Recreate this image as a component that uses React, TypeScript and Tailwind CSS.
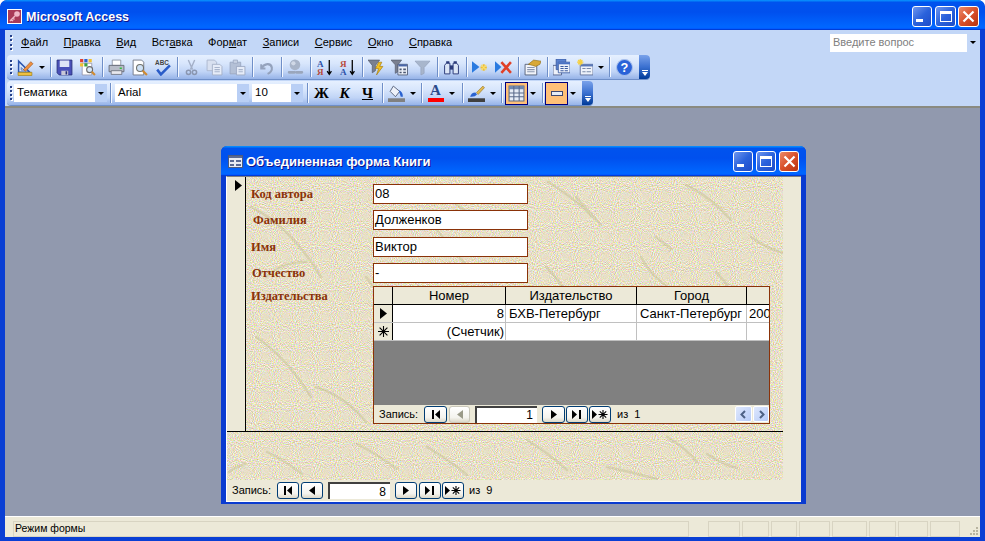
import type { ReactNode } from "react";

const Sep = () => (
  <div className="flex h-[20px] w-[6px] shrink-0 justify-center">
    <div className="h-full w-px bg-[#6f8fc8] shadow-[1px_0_0_#f4f8ff]" />
  </div>
);

const Caret = ({ w = 10 }: { w?: number }) => (
  <div className="flex h-[22px] shrink-0 items-center justify-center" style={{ width: w }}>
    <div className="h-0 w-0 border-x-[3px] border-t-[3px] border-x-transparent border-t-black" />
  </div>
);

const Btn = ({ children }: { children: ReactNode }) => (
  <div className="flex h-[22px] w-[23px] shrink-0 items-center justify-center">{children}</div>
);

const Ico = ({ children }: { children: ReactNode }) => (
  <svg width="17" height="17" viewBox="0 0 16 16" className="shrink-0">
    {children}
  </svg>
);

const Gripper = () => (
  <div className="ml-[3px] mr-[2px] flex h-[17px] w-[2px] shrink-0 flex-col justify-between py-px">
    {[0, 1, 2, 3].map((i) => (
      <div key={i} className="h-[2px] w-[2px] bg-[#27418a] shadow-[1px_1px_0_#fff]" />
    ))}
  </div>
);

const EndCap = () => (
  <div className="flex h-full w-[11px] shrink-0 flex-col items-center justify-end rounded-r-[4px] bg-[linear-gradient(180deg,#7aa2ea,#3a70d0_50%,#003a98)] pb-[3px]">
    <div className="mb-px h-px w-[6px] bg-white" />
    <div className="h-0 w-0 border-x-[3px] border-t-[4px] border-x-transparent border-t-white" />
  </div>
);

const Toolbar = ({ width, children }: { width: string; children: ReactNode }) => (
  <div className={`flex h-[24px] items-center rounded-[4px] bg-[linear-gradient(180deg,#e6f0ff_0%,#d8e6fc_35%,#c0d4f6_70%,#96b3e8_100%)] shadow-[0_1px_0_#6f8fc8] ${width}`}>
    {children}
  </div>
);

const Combo = ({ label, w, cls = "" }: { label: string; w: string; cls?: string }) => (
  <div className={`flex h-[18px] shrink-0 items-center bg-white pl-[3px] text-[11.5px] text-black ${w} ${cls}`}>
    <span className="flex-1">{label}</span>
    <div className="flex h-full w-[12px] items-center justify-center bg-[#b9cff5]">
      <div className="h-0 w-0 border-x-[3px] border-t-[3px] border-x-transparent border-t-black" />
    </div>
  </div>
);

const WinBtn = ({ kind, size }: { kind: "min" | "max" | "close"; size: string }) => (
  <div className={`flex shrink-0 items-center justify-center rounded-[3px] border border-white ${size} ${kind === "close" ? "bg-[linear-gradient(135deg,#eb8a6a,#d9502a_50%,#b8330f)]" : "bg-[linear-gradient(135deg,#6f96ee,#2a62dc_50%,#1e4cc8)]"}`}>
    {kind === "min" && <div className="mt-[8px] mr-[5px] h-[3px] w-[7px] bg-white" />}
    {kind === "max" && <div className="h-[11px] w-[12px] border border-t-[3px] border-white" />}
    {kind === "close" && (
      <svg width="13" height="13" viewBox="0 0 13 13">
        <path d="M1.5 1.5l10 10M11.5 1.5l-10 10" stroke="#fff" strokeWidth="2.2" />
      </svg>
    )}
  </div>
);

// noise + faint streaks for the form background
const Texture = ({ id, streaks }: { id: string; streaks: string }) => (
  <svg className="absolute inset-0 h-full w-full">
    <filter id={id} x="0" y="0" width="100%" height="100%" colorInterpolationFilters="sRGB">
      <feTurbulence type="fractalNoise" baseFrequency="0.95" numOctaves="1" seed="4" />
      <feColorMatrix
        type="matrix"
        values="0.55 0 0 0 0.63  0 0.55 0 0 0.6  0 0 0.9 0 0.33  0 0 0 0 1"
      />
    </filter>
    <rect width="100%" height="100%" filter={`url(#${id})`} />
    <path d={streaks} fill="none" stroke="#c4be92" strokeWidth="2.5" strokeLinecap="round" opacity="0.45" />
  </svg>
);

const Field = ({ label, value, pad }: { label: string; value: string; pad: string }) => (
  <div className="flex h-[20px] items-center">
    <div className={`w-[122px] shrink-0 font-['Liberation_Serif',serif] text-[12.5px] font-bold text-[#8a3208] ${pad}`}>{label}</div>
    <div className="flex h-[20px] w-[155px] items-center border border-[#8a3208] bg-white pl-px text-[13px] text-black">{value}</div>
  </div>
);

const NavGlyph = ({ kind, dim }: { kind: string; dim?: boolean }) => {
  const c = dim ? "#9a9a88" : "#000";
  return (
    <svg width="16" height="11" viewBox="0 0 16 11">
      {kind === "first" && <path d="M4 1h2v9H4zM12 1v9L7 5.5z" fill={c} />}
      {kind === "prev" && <path d="M11 1v9L5 5.5z" fill={c} />}
      {kind === "next" && <path d="M5 1v9l6-4.5z" fill={c} />}
      {kind === "last" && <path d="M3 1v9l5-4.5zM10 1h2v9h-2z" fill={c} />}
      {kind === "new" && (
        <g>
          <path d="M0 1v9l5-4.5z" fill={c} />
          <path d="M11 1v9M6.5 5.5h9M7.8 2.3l6.4 6.4M14.2 2.3l-6.4 6.4" stroke={c} strokeWidth="1.1" />
        </g>
      )}
    </svg>
  );
};

const NavBtn = ({ kind, w, dim, cls = "" }: { kind: string; w: string; dim?: boolean; cls?: string }) => (
  <div className={`flex h-[17px] shrink-0 items-center justify-center rounded-[3px] border bg-[linear-gradient(180deg,#ffffff,#f4f3ee_70%,#dcd8c8)] ${dim ? "border-[#c9c7ba]" : "border-[#003c74]"} ${w} ${cls}`}>
    <NavGlyph kind={kind} dim={dim} />
  </div>
);

const NavInput = ({ value }: { value: string }) => (
  <div className="flex h-[17px] w-[62px] shrink-0 items-center justify-end border-l-2 border-t-2 border-[#404040] bg-white pr-[4px] text-[12px] text-black">{value}</div>
);

const ScrollBtn = ({ d, w }: { d: string; w: string }) => (
  <div className={`flex h-[16px] shrink-0 items-center justify-center rounded-[2px] border border-white bg-[linear-gradient(135deg,#dfe8fd,#b6cbf8)] ${w}`}>
    <svg width="9" height="9" viewBox="0 0 9 9">
      <path d={d} fill="none" stroke="#4d6185" strokeWidth="2" />
    </svg>
  </div>
);

const cell = "flex h-full shrink-0 items-center border-r";

const Subform = () => (
  <div className="flex h-[138px] w-[397px] flex-col border border-[#8a3208] text-[13px] text-black">
    <div className="flex h-[18px] shrink-0 border-b border-black bg-[#ece9d8]">
      <div className={`${cell} w-[19px] border-black`} />
      <div className={`${cell} w-[113px] justify-center border-black`}>Номер</div>
      <div className={`${cell} w-[131px] justify-center border-black`}>Издательство</div>
      <div className={`${cell} w-[110px] justify-center border-black`}>Город</div>
    </div>
    <div className="flex h-[18px] shrink-0 border-b border-[#c0c0c0] bg-white">
      <div className={`${cell} w-[19px] justify-center border-black bg-[#ece9d8]`}>
        <svg width="9" height="11" viewBox="0 0 9 11"><path d="M1 0v11l7-5.500z" fill="#000" /></svg>
      </div>
      <div className={`${cell} w-[113px] justify-end border-[#c0c0c0] pr-px`}>8</div>
      <div className={`${cell} w-[131px] border-[#c0c0c0] pl-[3px]`}>БХВ-Петербург</div>
      <div className={`${cell} w-[110px] border-[#c0c0c0] pl-[3px]`}>Санкт-Петербург</div>
      <div className="flex h-full flex-1 items-center overflow-hidden pl-[2px]">200</div>
    </div>
    <div className="flex h-[18px] shrink-0 border-b border-[#c0c0c0] bg-white">
      <div className={`${cell} w-[19px] justify-center border-black bg-[#ece9d8]`}>
        <svg width="11" height="11" viewBox="0 0 11 11">
          <path d="M5.5 0v11M0 5.5h11M1.6 1.6l7.8 7.8M9.4 1.6l-7.8 7.8" stroke="#000" strokeWidth="1.1" />
        </svg>
      </div>
      <div className={`${cell} w-[113px] justify-end border-[#c0c0c0] pr-px`}>(Счетчик)</div>
      <div className={`${cell} w-[131px] border-[#c0c0c0]`} />
      <div className={`${cell} w-[110px] border-[#c0c0c0]`} />
    </div>
    <div className="h-[64px] shrink-0 bg-[#808080]" />
    <div className="flex flex-1 items-center bg-[#ece9d8] pl-[5px] text-[11px]">
      <span className="w-[45px] shrink-0">Запись:</span>
      <NavBtn kind="first" w="w-[23px]" />
      <NavBtn kind="prev" w="w-[21px]" dim cls="ml-[2px]" />
      <div className="ml-[5px]"><NavInput value="1" /></div>
      <NavBtn kind="next" w="w-[23px]" cls="ml-[5px]" />
      <NavBtn kind="last" w="w-[22px]" cls="ml-px" />
      <NavBtn kind="new" w="w-[22px]" cls="ml-px" />
      <span className="ml-[6px]">из&nbsp;&nbsp;1</span>
      <div className="ml-auto flex gap-px">
        <ScrollBtn d="M6 1L2.5 4.5 6 8" w="w-[17px]" />
        <ScrollBtn d="M3 1l3.5 3.5L3 8" w="w-[16px]" />
      </div>
    </div>
  </div>
);

const FormWindow = () => (
  <div className="flex h-[358px] w-[585px] flex-col rounded-t-[6px] bg-[#0a3bd0]">
    <div className="flex h-[30px] shrink-0 items-center rounded-t-[6px] bg-[linear-gradient(180deg,#0997ff,#0053ee_8%,#0050ee_40%,#0066ff_88%,#0066ff_93%,#005bff_95%,#003dd7_96%,#003dd7)] pl-[7px] pr-[7px]">
      <svg width="15" height="13" viewBox="0 0 15 13" className="mr-[3px] shrink-0">
        <rect x="0.5" y="0.5" width="14" height="12" fill="#e8ecf4" stroke="#4a5a80" />
        <path d="M1 1h13v2H1z" fill="#5a6a94" />
        <path d="M2 5h4v2H2zM8 5h5v2H8zM2 9h4v2H2zM8 9h5v2H8z" fill="#5a6a94" />
      </svg>
      <span className="pt-[2px] font-['Liberation_Sans',sans-serif] text-[13px] font-bold text-white [text-shadow:1px_1px_0_#0f1089]">Объединенная форма Книги</span>
      <div className="ml-auto flex gap-[3px]">
        <WinBtn kind="min" size="h-[21px] w-[20px]" />
        <WinBtn kind="max" size="h-[21px] w-[20px]" />
        <WinBtn kind="close" size="h-[21px] w-[20px]" />
      </div>
    </div>
    <div className="mx-[5px] flex h-[325px] shrink-0 flex-col border-l border-t border-l-white border-t-[#808080] bg-[#ece9d8] shadow-[0_1px_0_#fff]">
      <div className="flex h-[303px] shrink-0">
        <div className="flex w-[556px] shrink-0 flex-col">
          <div className="flex h-[254px] shrink-0">
            <div className="w-[19px] shrink-0 border-r border-black pl-[8px] pt-[3px]">
              <svg width="7" height="11" viewBox="0 0 7 11"><path d="M0 0v11l7-5.5z" fill="#000" /></svg>
            </div>
            <div className="relative flex-1 overflow-hidden">
              <Texture
                id="tex-detail"
                streaks="M302 5q25 15 45 35M330 20l25 28M440 8q25 12 45 35M505 60q20 15 42 18M300 90q25 25 45 70M410 60l15 12M420 110q-20 10-35 22M395 80q10 20 40 40M470 95q15 15 30 45M5 30q40 20 70 70M120 100q25 30 40 90M180 40l50 60M10 160q30 20 55 60M70 210q30 10 50 35M200 20l35 25M20 100q15-15 40-15M445 150q15 15 25 40"
              />
              <div className="relative flex flex-col pl-[5px] pt-[7px]">
                <Field label="Код автора" value="08" pad="" />
                <div className="mt-[6px]">
                  <Field label="Фамилия" value="Долженков" pad="pl-[2px]" />
                </div>
                <div className="mt-[7px]">
                  <Field label="Имя" value="Виктор" pad="" />
                </div>
                <div className="mt-[6px]">
                  <Field label="Отчество" value="-" pad="pl-px" />
                </div>
                <div className="mt-[3px] flex">
                  <div className="flex h-[20px] w-[122px] shrink-0 items-center font-['Liberation_Serif',serif] text-[12.5px] font-bold text-[#8a3208]">Издательства</div>
                  <Subform />
                </div>
              </div>
            </div>
          </div>
          <div className="h-px shrink-0 bg-black" />
          <div className="relative flex-1 overflow-hidden">
            <Texture
              id="tex-footer"
              streaks="M2 40q8-6 16-8M130 12q20 10 40 25M200 15q25 15 40 28M300 8q20 12 40 30M380 35q25 5 50 12M440 5q20 12 30 25M40 20q20 10 35 22M480 22q15 10 30 14"
            />
          </div>
        </div>
      </div>
      <div className="flex flex-1 items-center pl-[5px] text-[11px] text-black">
        <span className="w-[45px] shrink-0">Запись:</span>
        <NavBtn kind="first" w="w-[22px]" />
        <NavBtn kind="prev" w="w-[22px]" cls="ml-[2px]" />
        <div className="ml-[5px]"><NavInput value="8" /></div>
        <NavBtn kind="next" w="w-[22px]" cls="ml-[5px]" />
        <NavBtn kind="last" w="w-[22px]" cls="ml-[2px]" />
        <NavBtn kind="new" w="w-[22px]" cls="ml-px" />
        <span className="ml-[5px]">из&nbsp;&nbsp;9</span>
      </div>
    </div>
  </div>
);

const ToolbarOne = () => (
  <Toolbar width="w-[643px]">
    <Gripper />
    <Btn>
      <Ico>
        <path d="M1.5 2v10.5H12z" fill="#dce8fa" stroke="#2a55b0" strokeWidth="1.4" />
        <path d="M4 8v2.500h2.500z" fill="#fff" stroke="#2a55b0" strokeWidth=".7" />
        <path d="M1 12.500h13v3H1z" fill="#f0c040" stroke="#9a7a10" strokeWidth=".6" />
        <path d="M6 10l7-7.500 2 2L8 11.500z" fill="#f09040" stroke="#9a5018" strokeWidth=".6" />
      </Ico>
    </Btn>
    <Caret />
    <Sep />
    <Btn>
      <Ico>
        <path d="M1 1h14v14H3l-2-2z" fill="#4a50b8" stroke="#28307a" strokeWidth=".8" />
        <path d="M3.500 1.500h9v6h-9z" fill="#dfe4f6" />
        <path d="M5 11h6.500v4H5z" fill="#c8c8d8" />
        <path d="M9 11.500h1.500v3H9z" fill="#28307a" />
      </Ico>
    </Btn>
    <Btn>
      <Ico>
        <path d="M3 4h9v11H3z" fill="#fff" stroke="#8a8aa0" strokeWidth=".7" />
        <path d="M1 0h3v3H1z" fill="#e04030" />
        <path d="M5 0h3v3H5z" fill="#3060d0" />
        <path d="M9 0h3v3H9zM1 4h3v3H1z" fill="#f0c030" />
        <path d="M5 4h3v3H5z" fill="#40a040" />
        <circle cx="10" cy="10" r="2.800" fill="#d8e8f8" stroke="#6a6a6a" />
        <path d="M12 12l3 3" stroke="#d08a30" strokeWidth="2" />
      </Ico>
    </Btn>
    <Sep />
    <Btn>
      <Ico>
        <path d="M4 1h8v5H4z" fill="#fff" stroke="#7a8090" strokeWidth=".7" />
        <path d="M1 6h14v6H1z" fill="#b8bcc8" stroke="#606470" strokeWidth=".8" />
        <path d="M3 11h10v3.500H3z" fill="#e8e8ee" stroke="#606470" strokeWidth=".7" />
        <path d="M11 8h2v1.500h-2z" fill="#30c040" />
      </Ico>
    </Btn>
    <Btn>
      <Ico>
        <path d="M2 1h8l2 2v12H2z" fill="#fff" stroke="#6a7080" strokeWidth=".8" />
        <circle cx="8.500" cy="8.500" r="3.300" fill="#cfe2f6" stroke="#70706a" />
        <path d="M11 11l4 4" stroke="#d08a30" strokeWidth="2" />
      </Ico>
    </Btn>
    <Btn>
      <Ico>
        <text x="1" y="6" fontSize="6" fontWeight="700" fontFamily="Liberation Sans" fill="#444">ABC</text>
        <path d="M3 10l3.500 4.500L15 6" fill="none" stroke="#2a5cc8" strokeWidth="2.400" />
      </Ico>
    </Btn>
    <Sep />
    <Btn>
      <Ico>
        <path d="M5 1l4 9M11 1L7 10" stroke="#a4b0c8" strokeWidth="1.300" />
        <circle cx="5.200" cy="12.500" r="2" fill="none" stroke="#8a96b0" strokeWidth="1.400" />
        <circle cx="10.800" cy="12.500" r="2" fill="none" stroke="#8a96b0" strokeWidth="1.400" />
      </Ico>
    </Btn>
    <Btn>
      <Ico>
        <path d="M1 1h7l2 2v8H1z" fill="#d8e0f0" stroke="#a8b4cc" strokeWidth=".8" />
        <path d="M6 5h7l2 2v8H6z" fill="#e6ecf8" stroke="#a0acc4" strokeWidth=".8" />
        <path d="M8 8h5M8 10h5M8 12h5" stroke="#a8b4cc" />
      </Ico>
    </Btn>
    <Btn>
      <Ico>
        <path d="M1 3h10v11H1z" fill="#b4c0d6" stroke="#9aa6c0" strokeWidth=".8" />
        <path d="M4 1h4v3H4z" fill="#c8d2e4" stroke="#9aa6c0" strokeWidth=".7" />
        <path d="M7 7h8v8H7z" fill="#e6ecf8" stroke="#9aa6c0" strokeWidth=".8" />
        <path d="M9 10h4M9 12h4" stroke="#a8b4cc" />
      </Ico>
    </Btn>
    <Sep />
    <Btn>
      <Ico>
        <path d="M3 5v4h4" fill="none" stroke="#94a2bc" strokeWidth="1.800" />
        <path d="M3.500 8.500C6 4 12 3.500 13 8c.5 2.500-1.500 5-4 6" fill="none" stroke="#94a2bc" strokeWidth="2" />
      </Ico>
    </Btn>
    <Sep />
    <Btn>
      <Ico>
        <circle cx="7.500" cy="5.500" r="5" fill="#a8b4c8" />
        <circle cx="6" cy="4" r="2" fill="#d0d8e6" />
        <path d="M2 12.500h5M9 12.500h5" stroke="#9aa6bc" strokeWidth="2.600" strokeLinecap="round" fill="none" />
      </Ico>
    </Btn>
    <Sep />
    <Btn>
      <Ico>
        <text x="1" y="7.500" fontSize="8.500" fontWeight="700" fontFamily="Liberation Serif" fill="#2a50a8">А</text>
        <text x="1" y="15.500" fontSize="8.500" fontWeight="700" fontFamily="Liberation Serif" fill="#b84a3c">Я</text>
        <path d="M12.500 1v13M10.500 11.500l2 3 2-3" fill="none" stroke="#000" strokeWidth="1.200" />
      </Ico>
    </Btn>
    <Btn>
      <Ico>
        <text x="1" y="7.500" fontSize="8.500" fontWeight="700" fontFamily="Liberation Serif" fill="#b84a3c">Я</text>
        <text x="1" y="15.500" fontSize="8.500" fontWeight="700" fontFamily="Liberation Serif" fill="#2a50a8">А</text>
        <path d="M12.500 1v13M10.500 11.500l2 3 2-3" fill="none" stroke="#000" strokeWidth="1.200" />
      </Ico>
    </Btn>
    <Sep />
    <Btn>
      <Ico>
        <path d="M0 1h11L7 6v5l-3 2V6z" fill="#7a8090" stroke="#50566a" strokeWidth=".6" />
        <path d="M10 3l-3 6h3l-2 6 6-8h-3l2-4z" fill="#f4c020" stroke="#a07808" strokeWidth=".6" />
      </Ico>
    </Btn>
    <Btn>
      <Ico>
        <path d="M0 1h10L6.500 5.500V12L4 13.500V5.500z" fill="#7a8090" stroke="#50566a" strokeWidth=".6" />
        <path d="M6.500 5h9v10h-9z" fill="#eef2fa" stroke="#4a5670" strokeWidth=".8" />
        <path d="M7 5h8v2H7z" fill="#4a66a8" />
        <path d="M8 9h2v1.500H8zM11.500 9H14v1.500h-2.500zM8 12h2v1.500H8zM11.500 12H14v1.500h-2.500z" fill="#4a5670" />
      </Ico>
    </Btn>
    <Btn>
      <Ico>
        <path d="M1 2h14L9.500 8v5.500L6.500 15V8z" fill="#a8b6cc" stroke="#94a2bc" strokeWidth=".7" />
      </Ico>
    </Btn>
    <Sep />
    <Btn>
      <Ico>
        <path d="M3 2h3v3H3zM10 2h3v3h-3z" fill="#2a3a7a" />
        <path d="M1.500 6L3 4h3.500v10h-5zM9.500 4H13l1.500 2v8h-5z" fill="#dce6f6" stroke="#2a3a7a" strokeWidth=".9" />
        <path d="M6.500 6h3v4h-3z" fill="#2a3a7a" />
      </Ico>
    </Btn>
    <Sep />
    <Btn>
      <Ico>
        <path d="M0 2v11l7-5.500z" fill="#2a7ae0" />
        <path d="M8 7h6v2H8zM10 5h2v6h-2z" fill="#f0c030" />
        <path d="M8.500 5.500l5 5M13.500 5.500l-5 5" stroke="#f8dc70" strokeWidth="1.200" />
      </Ico>
    </Btn>
    <Btn>
      <Ico>
        <path d="M0 2v11l6-5.500z" fill="#2a7ae0" />
        <path d="M6 3l9 10M15 3L6 13" stroke="#e04028" strokeWidth="2.400" />
      </Ico>
    </Btn>
    <Sep />
    <Btn>
      <Ico>
        <path d="M1 5h11v10H1z" fill="#f2f4fa" stroke="#4a5670" strokeWidth=".8" />
        <path d="M3 8h7M3 10h7M3 12h7" stroke="#8a96b0" />
        <path d="M4 5l5-4 7 1-1 3-4 2-3-1z" fill="#d8a838" stroke="#806010" strokeWidth=".5" />
      </Ico>
    </Btn>
    <Sep />
    <Btn>
      <Ico>
        <path d="M0 6h8v9H0z" fill="#eef2fa" stroke="#4a5a88" strokeWidth=".8" />
        <path d="M3 0h9v10H3z" fill="#5a82d0" stroke="#3a5aa0" strokeWidth=".8" />
        <path d="M5 3h11v10H5z" fill="#eef2fa" stroke="#3a5aa0" strokeWidth=".8" />
        <path d="M5 3h11v2H5z" fill="#4a72c4" />
        <path d="M7 7h3M11 7h3M7 9h3M11 9h3M7 11h3M11 11h3" stroke="#3a5aa0" />
      </Ico>
    </Btn>
    <Btn>
      <Ico>
        <path d="M4 5h12v10H4z" fill="#eef2fa" stroke="#5a6a94" strokeWidth=".8" />
        <path d="M4 5h12v2H4z" fill="#5a78b8" />
        <path d="M6 9h3M10 9h4M6 12h3M10 12h4" stroke="#7a8aa8" />
        <path d="M1 3h6M4 0v6M2 1l4 4M6 1L2 5" stroke="#f6d040" strokeWidth="1.200" />
      </Ico>
    </Btn>
    <Caret />
    <Sep />
    <div className="ml-px">
      <Btn>
        <svg width="17" height="17" viewBox="0 0 16 16">
          <circle cx="8" cy="8" r="7.500" fill="#2a62d8" stroke="#a8c0ec" />
          <text x="8" y="12.500" textAnchor="middle" fontSize="12" fontWeight="700" fontFamily="Liberation Sans" fill="#fff">?</text>
        </svg>
      </Btn>
    </div>
    <div className="flex-1" />
    <EndCap />
  </Toolbar>
);

const ToolbarTwo = () => (
  <Toolbar width="w-[586px]">
    <Gripper />
    <Combo label="Тематика" w="w-[93px]" />
    <Sep />
    <Combo label="Arial" w="w-[134px]" cls="ml-[2px]" />
    <Combo label="10" w="w-[51px]" cls="ml-[3px]" />
    <div className="w-px" />
    <Sep />
    <Btn><span className="font-['Liberation_Serif',serif] text-[15px] font-bold text-black">Ж</span></Btn>
    <Btn><span className="font-['Liberation_Serif',serif] text-[15px] font-bold italic text-black">К</span></Btn>
    <Btn><span className="font-['Liberation_Serif',serif] text-[15px] font-bold text-black underline">Ч</span></Btn>
    <Sep />
    <Btn>
      <Ico>
        <path d="M5 1l6 5-4 5-5-5z" fill="#eef2fa" stroke="#4a5670" strokeWidth=".8" />
        <path d="M10 5q4 1 4 6h-2z" fill="#2a62d0" />
        <path d="M0 12.500h16v3.500H0z" fill="#808080" />
      </Ico>
    </Btn>
    <Caret />
    <Sep />
    <Btn>
      <div className="flex flex-col items-center">
        <span className="font-['Liberation_Serif',serif] text-[15px] font-bold leading-[13px] text-[#2a4a8a]">A</span>
        <div className="mt-px h-[4px] w-[16px] bg-[#ff0000]" />
      </div>
    </Btn>
    <Caret />
    <div className="w-[2px]" />
    <Sep />
    <Btn>
      <Ico>
        <path d="M2 11q1-4 5-4l1.500 2q-2 2.500-6.500 2z" fill="#2a62d0" />
        <path d="M8 7l6-6 1.500 1.500-6 6.500z" fill="#e0b850" stroke="#8a6a18" strokeWidth=".5" />
        <path d="M0 12.500h16v3.500H0z" fill="#404040" />
      </Ico>
    </Btn>
    <Caret />
    <Sep />
    <div className="ml-px flex h-[23px] w-[23px] shrink-0 items-center justify-center border border-[#00007f] bg-[#ffc078]">
      <Ico>
        <path d="M1 1h14v14H1z" fill="#e6ecf6" stroke="#5a6a8a" />
        <path d="M1 1h14v3H1z" fill="#7088b0" />
        <path d="M1 7.500h14M1 11h14M5.500 1v14M10.500 1v14" stroke="#5a6a8a" />
      </Ico>
    </div>
    <Caret />
    <div className="w-px" />
    <Sep />
    <div className="flex h-[23px] w-[23px] shrink-0 items-center justify-center border border-[#00007f] bg-[#ffc078]">
      <div className="h-[5px] w-[12px] border border-[#404870] bg-[#e6ecf6]" />
    </div>
    <Caret />
    <div className="flex-1" />
    <EndCap />
  </Toolbar>
);

const menu: [string, string, string][] = [
  ["", "Ф", "айл"],
  ["", "П", "равка"],
  ["", "В", "ид"],
  ["Вст", "а", "вка"],
  ["Фор", "м", "ат"],
  ["", "З", "аписи"],
  ["", "С", "ервис"],
  ["", "О", "кно"],
  ["", "С", "правка"],
];

const statusPanels = ["w-[32px]", "w-[27px]", "w-[26px]", "w-[31px]", "w-[35px]", "w-[27px]", "w-[30px]", "w-[30px]"];

export default function App() {
  return (
    <div className="flex h-[541px] w-[985px] flex-col overflow-hidden rounded-t-[7px] bg-[#0a3fd4] font-['Liberation_Sans',sans-serif]">
      <div className="flex h-[30px] shrink-0 items-center rounded-t-[7px] bg-[linear-gradient(180deg,#0997ff,#0053ee_8%,#0050ee_40%,#0066ff_88%,#0066ff_93%,#005bff_95%,#003dd7_96%,#003dd7)] pl-[7px] pr-[6px]">
        <svg width="15" height="15" viewBox="0 0 15 15" className="mr-[4px] mt-[2px] shrink-0">
          <rect x="0.5" y="0.5" width="14" height="14" fill="#a83a58" stroke="#fff" />
          <circle cx="10" cy="5" r="2.800" fill="#f0b8c8" />
          <path d="M8 7l-5 5M4.500 10.500l1.500 1.500M6 9l1.500 1.500" stroke="#f0b8c8" strokeWidth="1.500" />
        </svg>
        <span className="pt-[4px] text-[12.5px] font-bold text-white [text-shadow:1px_1px_0_#0f1089]">Microsoft Access</span>
        <div className="ml-auto mt-[2px] flex">
          <WinBtn kind="min" size="h-[21px] w-[20px]" />
          <div className="ml-[3px]"><WinBtn kind="max" size="h-[21px] w-[21px]" /></div>
          <div className="ml-[2px]"><WinBtn kind="close" size="h-[21px] w-[21px]" /></div>
        </div>
      </div>

      <div className="mx-[5px] flex h-[507px] shrink-0 flex-col">
        <div className="flex h-[76px] shrink-0 flex-col bg-[#c3d7f7] pl-[2px]">
          <div className="flex h-[25px] shrink-0 items-center text-[11px] text-black">
            <Gripper />
            <div className="ml-[7px] flex gap-[15.5px]">
              {menu.map(([a, k, b], i) => (
                <span key={i}>
                  {a}
                  <u>{k}</u>
                  {b}
                </span>
              ))}
            </div>
            <div className="ml-auto mr-[2px] flex h-[18px] w-[148px] items-center bg-white pl-[3px] text-[11px] text-[#808080]">
              <span className="flex-1">Введите вопрос</span>
              <div className="flex h-full w-[11px] items-center justify-center bg-[#c3d7f7]">
                <div className="h-0 w-0 border-x-[3px] border-t-[3px] border-x-transparent border-t-black" />
              </div>
            </div>
          </div>
          <ToolbarOne />
          <div className="mt-[2px]">
            <ToolbarTwo />
          </div>
        </div>
        <div className="flex-1 border-t-2 border-t-[#8a8a80] bg-[#9199ae] pl-[216px] pt-[38px]">
          <FormWindow />
        </div>
        <div className="flex h-[21px] shrink-0 items-center border-t border-white bg-[#ece9d8] pl-[8px] pr-px pt-[3px] text-[10.5px] text-black">
          <div className="flex h-[16px] w-[676px] shrink-0 items-center border border-[#d8d4c2] pl-px">Режим формы</div>
          <div className="ml-[19px] flex gap-[2px]">
            {statusPanels.map((w, i) => (
              <div key={i} className={`h-[16px] border border-[#d8d4c2] ${w}`} />
            ))}
          </div>
          <svg width="12" height="12" viewBox="0 0 12 12" className="ml-auto self-end">
            <path d="M9 2h2v2H9zM6 5h2v2H6zM9 5h2v2H9zM3 8h2v2H3zM6 8h2v2H6zM9 8h2v2H9z" fill="#b8b4a0" />
          </svg>
        </div>
      </div>
    </div>
  );
}
